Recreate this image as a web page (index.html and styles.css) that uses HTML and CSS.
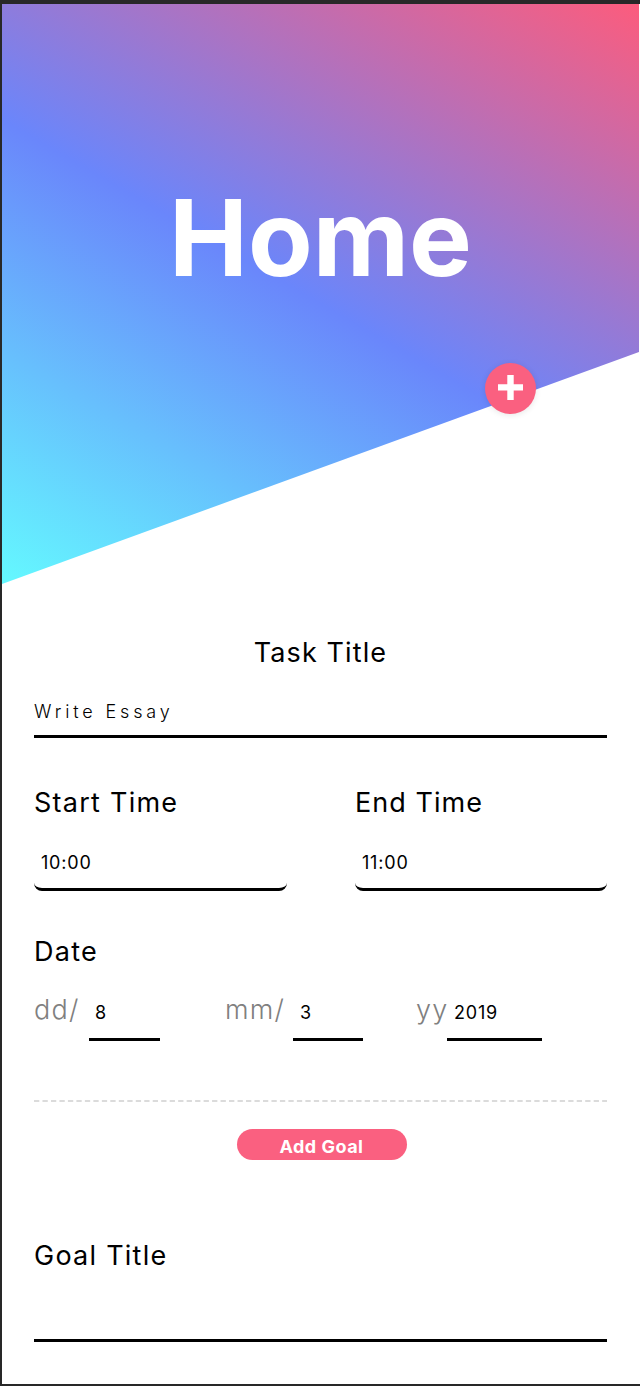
FILE: index.html
```html
<!DOCTYPE html>
<html lang="en">
<head>
<meta charset="utf-8">
<title>Home</title>
<link rel="stylesheet" href="styles.css">
</head>
<body>
<main class="screen">
  <header class="hero">
    <div class="hero-bg"><h1 class="hero-title">Home</h1></div>
    <button class="fab" aria-label="Add task">
      <svg class="fab-icon" viewBox="0 0 25 25"><path d="M9.3 0h6.4v9.3H25v6.2h-9.3V25H9.3v-9.5H0V9.3h9.3z"/></svg>
    </button>
  </header>
  <form class="form">
    <h2 class="label label-center">Task Title</h2>
    <div class="input-title">Write Essay</div>
    <div class="times">
      <div class="time"><h2 class="label">Start Time</h2><div class="input-time">10:00</div></div>
      <div class="time"><h2 class="label label-end">End Time</h2><div class="input-time">11:00</div></div>
    </div>
    <h2 class="label label-date">Date</h2>
    <div class="dates">
      <div class="date"><span class="unit unit-day">dd/</span><span class="input-date day">8</span></div>
      <div class="date"><span class="unit unit-month">mm/</span><span class="input-date month">3</span></div>
      <div class="date"><span class="unit unit-year">yy</span><span class="input-date year">2019</span></div>
    </div>
    <svg class="divider" viewBox="0 0 573 2"><path d="M0 1H573"/></svg>
    <button type="button" class="add-goal">Add Goal</button>
    <h2 class="label label-goal">Goal Title</h2>
    <div class="input-goal"></div>
  </form>
</main>
</body>
</html>
```

FILE: styles.css
```css
* { box-sizing: border-box; }
body {
  margin: 0;
  background: #282828;
  font-family: Inter, "Liberation Sans", sans-serif;
  color: #000;
}
.screen {
  height: 1380px;
  margin: 4px 0 2px 2px;
  background: #fff;
  overflow: hidden;
}
.hero {
  position: relative;
  width: 637px;
  height: 580px;
}
.hero-bg {
  height: 100%;
  padding-top: 170px;
  background: linear-gradient(30deg, #64f9ff 0%, #6a86fb 49%, #fc5c7d 100%);
  clip-path: polygon(0 0, 100% 0, 100% 60%, 0 100%);
}
.hero-title {
  margin: 0;
  font-size: 105.6px;
  line-height: 128px;
  font-weight: 700;
  text-align: center;
  color: #fff;
}
.fab {
  position: absolute;
  left: 483px;
  top: 359px;
  width: 51px;
  height: 51px;
  padding: 0;
  border: 0;
  border-radius: 50%;
  background: #fa6080;
  box-shadow: 0 1px 6px rgba(0, 0, 0, .1);
}
.fab-icon {
  display: block;
  width: 25px;
  height: 25px;
  margin: -2px 0 0 12.5px;
  fill: #fff;
}
.form {
  width: 573px;
  margin: 53px 0 0 32px;
}
.label {
  margin: 0;
  font-size: 27px;
  line-height: 32px;
  font-weight: 400;
  letter-spacing: 1.25px;
}
.label-center {
  letter-spacing: 1.1px;
  text-align: center;
}
.label-end { letter-spacing: 1.05px; }
.input-title {
  height: 69px;
  padding-top: 32px;
  border-bottom: 3px solid #000;
  font-size: 18px;
  line-height: 22px;
  font-weight: 300;
  letter-spacing: 3.85px;
}
.times {
  display: flex;
  justify-content: space-between;
  margin-top: 49px;
}
.time { width: 252px; }
.time:first-child { width: 253px; }
.input-time {
  height: 72px;
  padding: 33px 0 0 7px;
  border-bottom: 3px solid #000;
  border-radius: 8px;
  font-size: 18px;
  line-height: 22px;
  letter-spacing: .8px;
}
.label-date { margin-top: 45px; }
.dates {
  display: grid;
  grid-template-columns: 191px 191px 191px;
  margin-top: 26px;
}
.date { display: flex; }
.unit {
  font-size: 27px;
  line-height: 32px;
  font-weight: 300;
  letter-spacing: 1.2px;
  color: #808080;
}
.unit-day { width: 55px; }
.unit-month { width: 68px; }
.unit-year { width: 31px; }
.input-date {
  height: 47px;
  padding: 8px 0 0 7px;
  border-bottom: 3px solid #000;
  font-size: 18px;
  line-height: 22px;
  letter-spacing: .8px;
}
.day {
  width: 71px;
  padding-left: 6px;
}
.month { width: 70px; }
.year { width: 95px; }
.divider {
  display: block;
  width: 573px;
  height: 2px;
  margin-top: 59px;
  fill: none;
  stroke: #cfcfcf;
  stroke-width: 1.6;
  stroke-dasharray: 5.3 3.18;
}
.add-goal {
  display: block;
  width: 170px;
  height: 31px;
  margin: 27px 0 0 202.5px;
  padding: 4px 0 0;
  border: 0;
  border-radius: 16px;
  background: #fa6080;
  color: #fff;
  font: 700 18px/22px Inter, "Liberation Sans", sans-serif;
  letter-spacing: .5px;
}
.label-goal { margin-top: 80px; }
.input-goal {
  height: 70px;
  border-bottom: 3px solid #000;
}
```
